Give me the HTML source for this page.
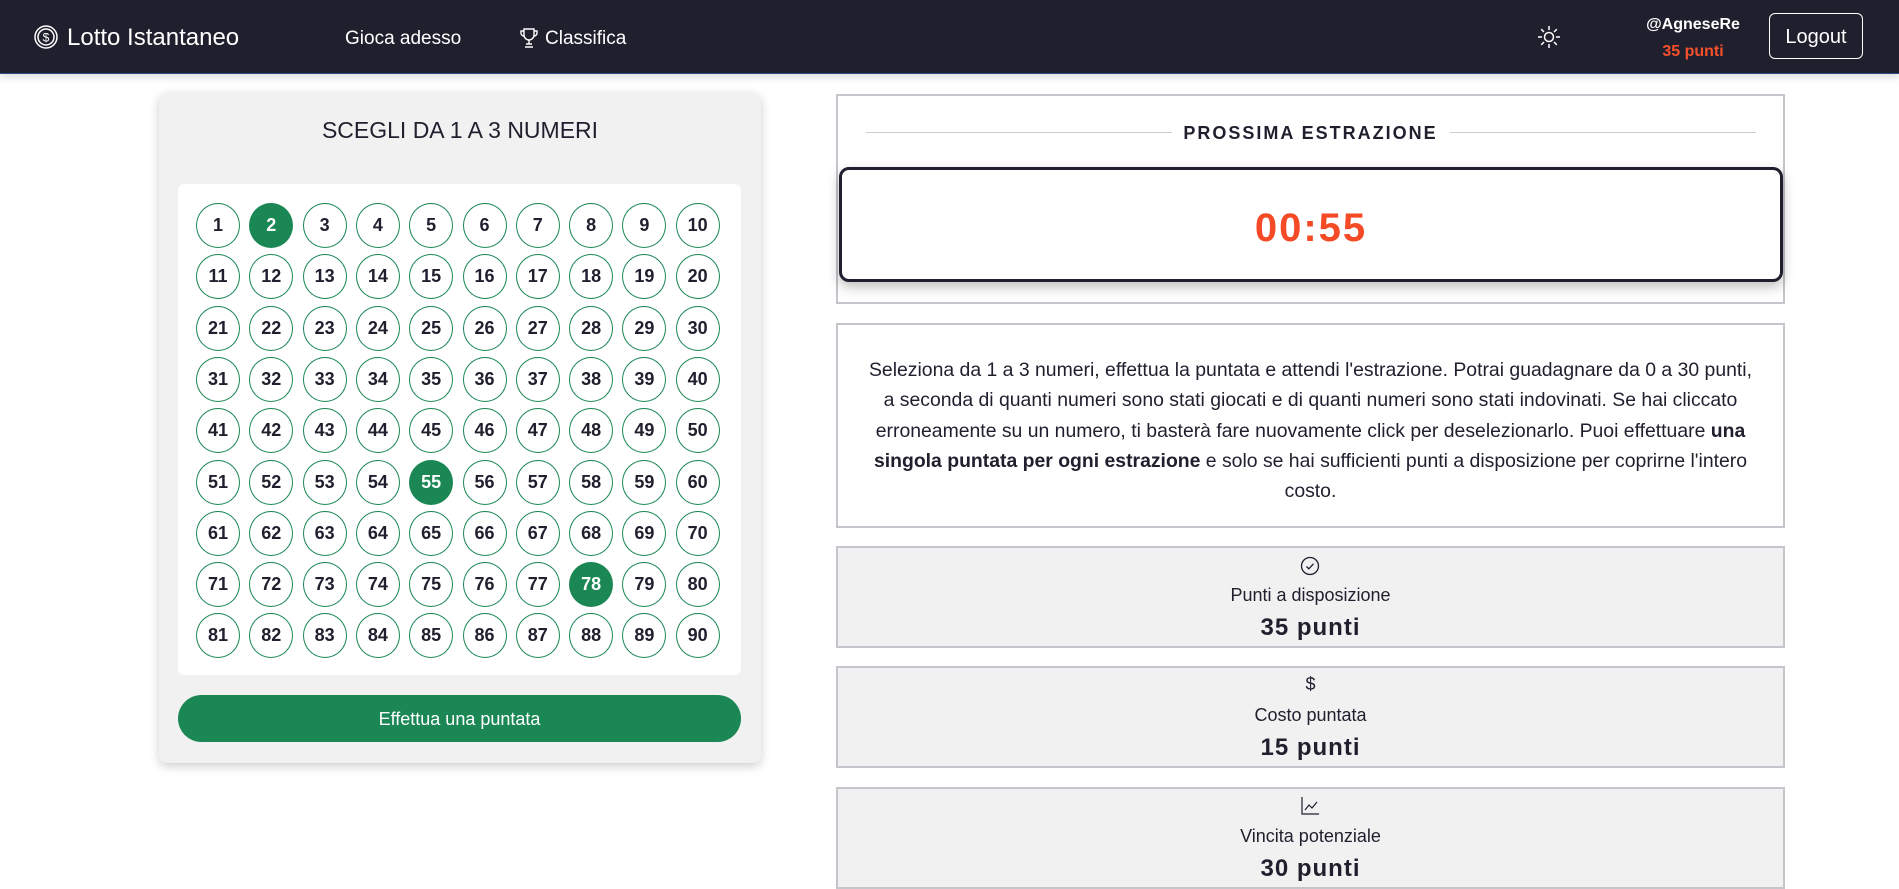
<!DOCTYPE html>
<html><head><meta charset="utf-8"><style>
*{box-sizing:border-box;margin:0;padding:0}
body{width:1899px;height:873px;overflow:hidden;background:#fff;font-family:"Liberation Sans",sans-serif;color:#1f1f2e;position:relative}
.nav{position:absolute;left:0;top:0;width:1899px;height:74px;background:#1f1f2e;border-bottom:1px solid #2a4f8a;box-shadow:0 3px 8px rgba(0,0,0,.15)}
.abs{position:absolute}
.navt{color:#fff;font-size:19px}
.card{position:absolute;left:159px;top:93px;width:602px;height:670px;background:#f1f1f1;border-radius:8px;box-shadow:0 3px 10px rgba(0,0,0,.2)}
.title{position:absolute;left:0;width:602px;top:24px;text-align:center;font-size:23px}
.grid{position:absolute;left:178px;top:184px;width:563px;height:491px;background:#fff;border-radius:6px}
.c{position:absolute;width:44px;height:45px;border:1.5px solid #1a8755;border-radius:50%;text-align:center;line-height:42px;font-weight:bold;font-size:18px;color:#1f1f2e;background:#fff}
.c.s{background:#1a8755;color:#fff}
.btn{position:absolute;left:178px;top:695px;width:563px;height:47px;background:#1a8755;border-radius:24px;color:#fff;text-align:center;line-height:49px;font-size:18px}
.box{position:absolute;left:836px;width:949px;border:2px solid #c3c6ca}
.stat{background:#f1f1f1;text-align:center}
.lab{font-size:18px;position:absolute;width:100%;text-align:center}
.val{font-size:24px;font-weight:bold;letter-spacing:1px;position:absolute;width:100%;text-align:center}
.desc{position:absolute;left:0;width:945px;top:30px;text-align:center;font-size:19.4px;line-height:30.3px;white-space:nowrap}
</style></head><body>
<div class="nav">
 <svg class="abs" style="left:34px;top:25px" width="24" height="24" viewBox="0 0 24 24" fill="none" stroke="#fff" stroke-width="1.5"><circle cx="12" cy="12" r="11"/><circle cx="12" cy="12" r="8"/><text x="12" y="16.5" text-anchor="middle" font-size="12" fill="#fff" stroke="none" font-family="Liberation Sans">$</text></svg>
 <div class="abs navt" style="left:67px;top:24px;font-size:24px">Lotto Istantaneo</div>
 <div class="abs navt" style="left:345px;top:28px">Gioca adesso</div>
 <svg class="abs" style="left:519px;top:27px" width="20" height="22" viewBox="0 0 20 22" fill="none" stroke="#fff" stroke-width="1.4"><path d="M5 2h10v6a5 5 0 0 1-10 0z"/><path d="M5 4H2v2a3 3 0 0 0 3 3M15 4h3v2a3 3 0 0 1-3 3"/><path d="M10 13v4M6 20h8M7 17h6"/></svg>
 <div class="abs navt" style="left:545px;top:28px">Classifica</div>
 <svg class="abs" style="left:1537px;top:25px" width="24" height="24" viewBox="0 0 24 24" fill="none" stroke="#fff" stroke-width="1.5"><circle cx="12" cy="12" r="4.5"/><path d="M12 1v4M12 19v4M1 12h4M19 12h4M4.2 4.2l2.8 2.8M17 17l2.8 2.8M4.2 19.8L7 17M17 7l2.8-2.8"/></svg>
 <div class="abs" style="left:1620px;width:146px;top:16px;text-align:center;color:#fff;font-weight:bold;font-size:16px">@AgneseRe</div>
 <div class="abs" style="left:1620px;width:146px;top:43px;text-align:center;color:#f5502a;font-weight:bold;font-size:16px">35 punti</div>
 <div class="abs" style="left:1769px;top:13px;width:94px;height:46px;border:1px solid #fff;border-radius:6px;color:#fff;text-align:center;line-height:46px;font-size:20px">Logout</div>
</div>

<div class="card"><div class="title">SCEGLI DA 1 A 3 NUMERI</div></div>
<div class="grid"></div>
<div id="g"></div>
<div class="btn">Effettua una puntata</div>

<div class="box" style="top:94px;height:210px">
 <div class="abs" style="left:28px;top:36px;width:306px;height:1px;background:#ccc"></div>
 <div class="abs" style="left:612px;top:36px;width:306px;height:1px;background:#ccc"></div>
 <div class="abs" style="left:0;width:945px;top:27px;text-align:center;font-weight:bold;font-size:18px;letter-spacing:2px">PROSSIMA ESTRAZIONE</div>
</div>
<div class="abs" style="left:839px;top:167px;width:944px;height:115px;border:3px solid #1f1f2e;border-radius:10px;background:#fff;box-shadow:0 5px 12px rgba(0,0,0,.25);text-align:center;line-height:117px;font-size:40px;font-weight:bold;color:#f44b26;letter-spacing:2px">00:55</div>

<div class="box" style="top:323px;height:205px">
 <div class="desc">Seleziona da 1 a 3 numeri, effettua la puntata e attendi l'estrazione. Potrai guadagnare da 0 a 30 punti,<br>a seconda di quanti numeri sono stati giocati e di quanti numeri sono stati indovinati. Se hai cliccato<br>erroneamente su un numero, ti basterà fare nuovamente click per deselezionarlo. Puoi effettuare <b>una</b><br><b>singola puntata per ogni estrazione</b> e solo se hai sufficienti punti a disposizione per coprirne l'intero<br>costo.</div>
</div>

<div class="box stat" style="top:546px;height:102px">
 <svg class="abs" style="left:462px;top:8px" width="20" height="20" viewBox="0 0 20 20" fill="none" stroke="#1f1f2e" stroke-width="1.3"><circle cx="10" cy="10" r="8.5"/><path d="M6.5 10.5l2.3 2.3 4.7-5"/></svg>
 <div class="lab" style="top:37px">Punti a disposizione</div>
 <div class="val" style="top:66px">35 punti</div>
</div>
<div class="box stat" style="top:666px;height:102px">
 <div class="lab" style="top:6px">$</div>
 <div class="lab" style="top:37px">Costo puntata</div>
 <div class="val" style="top:66px">15 punti</div>
</div>
<div class="box stat" style="top:787px;height:102px">
 <svg class="abs" style="left:462px;top:7px" width="20" height="20" viewBox="0 0 20 20" fill="none" stroke="#1f1f2e" stroke-width="1.2"><path d="M2 1v17h17"/><path d="M5 14l4-5 3 3 5-6"/></svg>
 <div class="lab" style="top:37px">Vincita potenziale</div>
 <div class="val" style="top:66px">30 punti</div>
</div>

<script>
var g=document.getElementById('g'),h='';
for(var i=0;i<90;i++){var r=Math.floor(i/10),c=i%10,n=i+1;
var x=218+c*53.3-22,y=225+r*51.3-22;
var s=(n==2||n==55||n==78)?' s':'';
h+='<div class="c'+s+'" style="left:'+x.toFixed(1)+'px;top:'+y.toFixed(1)+'px">'+n+'</div>';}
g.innerHTML=h;
</script>
</body></html>
